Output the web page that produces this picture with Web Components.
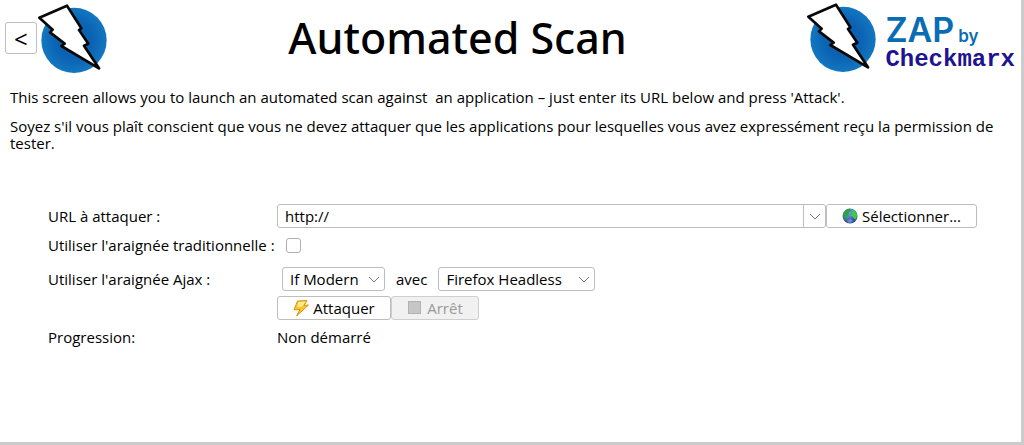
<!DOCTYPE html>
<html lang="fr">
<head>
  <meta charset="utf-8">
  <title>Automated Scan</title>
  <style>
    body {
      margin: 0;
      background: #fff;
      color: #000;
      font: 400 15px/17px "Open Sans", "Noto Sans", sans-serif;
    }
  </style>
</head>
<body>

<template id="boltTemplate">
  <style>
    :host { display: block; flex: none; width: 70px; height: 72px; }
    svg { display: block; width: 100%; height: 100%; }
  </style>
  <svg viewBox="0 0 210 216" aria-hidden="true">
    <defs>
      <radialGradient id="disc">
        <stop offset="0" stop-color="#0a58a8"/>
        <stop offset="0.6" stop-color="#0c64b4"/>
        <stop offset="1" stop-color="#1277c0"/>
      </radialGradient>
    </defs>
    <circle cx="108" cy="115" r="98" fill="url(#disc)"/>
    <path d="M4 47 L87 11 L130 79 L123 84 L151 125 L138 131 L183 199 L70 132 L80 125 L36 91 L44 83 Z"
          fill="#fff" stroke="#080808" stroke-width="8" stroke-linejoin="round"/>
  </svg>
</template>

<template id="brandTemplate">
  <style>
    :host { display: flex; gap: 8px; }
    .words { padding-top: 12px; }
    .zap { display: flex; align-items: baseline; gap: 4px; color: #0a6db3; font: 600 34px/34px Inter, sans-serif; }
    small { font-size: 17px; line-height: 17px; }
    .owner { color: #21138f; font: bold 24px/26px "Liberation Mono", monospace; }
  </style>
  <zap-bolt></zap-bolt>
  <div class="words">
    <div class="zap"><span>ZAP</span><small>by</small></div>
    <div class="owner">Checkmarx</div>
  </div>
</template>

<template id="buttonTemplate">
  <style>
    :host { display: inline-flex; }
    button {
      display: flex;
      flex: 1;
      align-items: center;
      justify-content: center;
      gap: 4px;
      height: 24px;
      padding: 0 15px;
      border: 1px solid #bdbdbd;
      border-radius: 3px;
      background: #fff;
      color: inherit;
      font: inherit;
      white-space: nowrap;
    }
    button:disabled { background: #f1f1f1; border-color: #cfcfcf; color: #999; }
    :host([square]) button { height: 32px; padding: 0 8px; font-size: 24px; }
  </style>
  <button type="button"><slot name="icon"></slot><slot></slot></button>
</template>

<template id="selectTemplate">
  <style>
    :host { display: inline-grid; align-items: center; }
    ::slotted(select), svg { grid-area: 1 / 1; }
    ::slotted(select) {
      appearance: none;
      height: 24px;
      margin: 0;
      padding: 0 24px 0 7px;
      border: 1px solid #bdbdbd;
      border-radius: 3px;
      background: #fff;
      color: inherit;
      font: inherit;
    }
    svg { justify-self: end; width: 12px; height: 8px; margin-right: 5px; pointer-events: none; z-index: 1; }
  </style>
  <slot></slot>
  <svg viewBox="0 0 12 8" aria-hidden="true"><path d="M1 2l5 5 5-5" fill="none" stroke="#777"/></svg>
</template>

<template id="comboTemplate">
  <style>
    :host {
      display: flex;
      box-sizing: border-box;
      height: 24px;
      border: 1px solid #bdbdbd;
      border-radius: 3px;
      background: #fff;
    }
    ::slotted(input) {
      flex: 1;
      min-width: 0;
      padding: 0 7px;
      border: 0;
      background: none;
      color: inherit;
      font: inherit;
      outline: 0;
    }
    button {
      display: grid;
      place-items: center;
      width: 22px;
      padding: 0;
      border: 0;
      border-left: 1px solid #bdbdbd;
      background: none;
    }
    svg { width: 12px; height: 8px; }
  </style>
  <slot></slot>
  <button type="button" aria-label="Historique">
    <svg viewBox="0 0 12 8"><path d="M1 2l5 5 5-5" fill="none" stroke="#777"/></svg>
  </button>
</template>

<template id="rowTemplate">
  <style>
    :host { display: grid; grid-template-columns: 229px 1fr; align-items: center; min-height: 34px; }
    :host([compact]) { min-height: 24px; }
    .field { display: flex; align-items: center; }
    ::slotted(label), ::slotted(span) { white-space: nowrap; }
  </style>
  <slot name="label"><span></span></slot>
  <div class="field"><slot></slot></div>
</template>

<template id="pageTemplate">
  <style>
    :host {
      display: block;
      box-sizing: border-box;
      min-height: 100vh;
      border: solid #ccc;
      border-width: 0 3px 3px 0;
    }
    header { display: grid; grid-template-columns: auto 1fr auto; padding: 1px 6px 0 5px; }
    .back { display: flex; align-items: center; gap: 1px; }
    h1 { margin: 0; text-align: center; font: 500 43px/74px "Noto Sans", sans-serif; color: #000; }
    .intro { padding: 14px 24px 0 10px; }
    p { margin: 0 0 12px; white-space: pre-wrap; }
    form { padding: 40px 44px 0 48px; }
    zap-combo { flex: 1; }
    .select { width: 151px; }
    .attack { width: 114px; }
    .stop { width: 88px; }
    input[type=checkbox] {
      appearance: none;
      width: 15px;
      height: 15px;
      margin: 0 0 0 9px;
      border: 1px solid #b0b0b0;
      border-radius: 3px;
      background: #fff;
    }
    .options { display: flex; align-items: center; gap: 11px; padding-left: 5px; }
    .modern { width: 103px; }
    .browser { width: 157px; }
    svg { display: block; width: 16px; height: 16px; }
  </style>
  <header>
    <div class="back">
      <zap-button square>&lt;</zap-button>
      <zap-bolt></zap-bolt>
    </div>
    <h1>Automated Scan</h1>
    <zap-brand></zap-brand>
  </header>
  <div class="intro">
    <p>This screen allows you to launch an automated scan against  an application – just enter its URL below and press 'Attack'.</p>
    <p>Soyez s'il vous plaît conscient que vous ne devez attaquer que les applications pour lesquelles vous avez expressément reçu la permission de tester.</p>
  </div>
  <form>
    <form-row compact>
      <label slot="label" for="url">URL à attaquer :</label>
      <zap-combo><input id="url" type="text" value="http://"></zap-combo>
      <zap-button class="select">
        <svg slot="icon" viewBox="0 0 16 16" aria-hidden="true">
          <defs>
            <radialGradient id="sea" cx="0.4" cy="0.3" r="0.7">
              <stop offset="0" stop-color="#7fa6e8"/>
              <stop offset="1" stop-color="#263f92"/>
            </radialGradient>
          </defs>
          <circle cx="8" cy="8" r="7.5" fill="url(#sea)"/>
          <path d="M1 6C2 2.500 5 .8 8 .8L8.500 3 6.500 5 7 7 4.500 8.500 5.500 10.500 4 11.500 1.500 9.500Z" fill="#2fa04a"/>
          <path d="M9 1.200L13 3 15.200 7 14 11.500 12 10.500 11 9 8.500 7.500 10 5.500Z" fill="#38cd49"/>
          <path d="M5 12L9 11 11 13 8.500 15 6 14.500Z" fill="#6a89cd"/>
        </svg>Sélectionner...</zap-button>
    </form-row>
    <form-row>
      <label slot="label" for="spider">Utiliser l'araignée traditionnelle :</label>
      <input id="spider" type="checkbox">
    </form-row>
    <form-row>
      <label slot="label" for="ajax">Utiliser l'araignée Ajax :</label>
      <div class="options">
        <zap-select class="modern"><select id="ajax"><option>If Modern</option></select></zap-select>
        <label for="browser">avec</label>
        <zap-select class="browser"><select id="browser"><option>Firefox Headless</option></select></zap-select>
      </div>
    </form-row>
    <form-row compact>
      <zap-button class="attack">
        <svg slot="icon" viewBox="0 0 16 16" aria-hidden="true">
          <path d="M4.500 1L14 .5 11 5.500 15.500 5 3.500 16 7 9.500 1 9.800Z"
                fill="#fbc52d" stroke="#d99413" stroke-linejoin="round"/>
          <path d="M5.500 2L12.500 1.500 9 6.500 4 7Z" fill="#ffeb8b"/>
        </svg>Attaquer</zap-button>
      <zap-button class="stop" disabled>
        <svg slot="icon" viewBox="0 0 16 16" aria-hidden="true">
          <rect x="1.500" y="1.500" width="12" height="12" fill="#c6c6c6" stroke="#b2b2b2"/>
        </svg>Arrêt</zap-button>
    </form-row>
    <form-row>
      <span slot="label">Progression:</span>
      <output>Non démarré</output>
    </form-row>
  </form>
</template>

<scan-page></scan-page>

<script>
function stamp(host, id) {
  const content = document.getElementById(id).content;
  const root = host.attachShadow({mode: 'open'});
  root.appendChild(content.cloneNode(true));
  return root;
}

customElements.define('zap-bolt', class extends HTMLElement {
  constructor() {
    super();
    stamp(this, 'boltTemplate');
  }
});

customElements.define('zap-brand', class extends HTMLElement {
  constructor() {
    super();
    stamp(this, 'brandTemplate');
  }
});

customElements.define('zap-button', class extends HTMLElement {
  constructor() {
    super();
    stamp(this, 'buttonTemplate');
  }
  connectedCallback() {
    this.shadowRoot.querySelector('button').disabled = this.hasAttribute('disabled');
  }
});

customElements.define('zap-select', class extends HTMLElement {
  constructor() {
    super();
    stamp(this, 'selectTemplate');
  }
});

customElements.define('zap-combo', class extends HTMLElement {
  constructor() {
    super();
    stamp(this, 'comboTemplate');
  }
});

customElements.define('form-row', class extends HTMLElement {
  constructor() {
    super();
    stamp(this, 'rowTemplate');
  }
});

customElements.define('scan-page', class extends HTMLElement {
  constructor() {
    super();
    stamp(this, 'pageTemplate');
  }
});
</script>

</body>
</html>
